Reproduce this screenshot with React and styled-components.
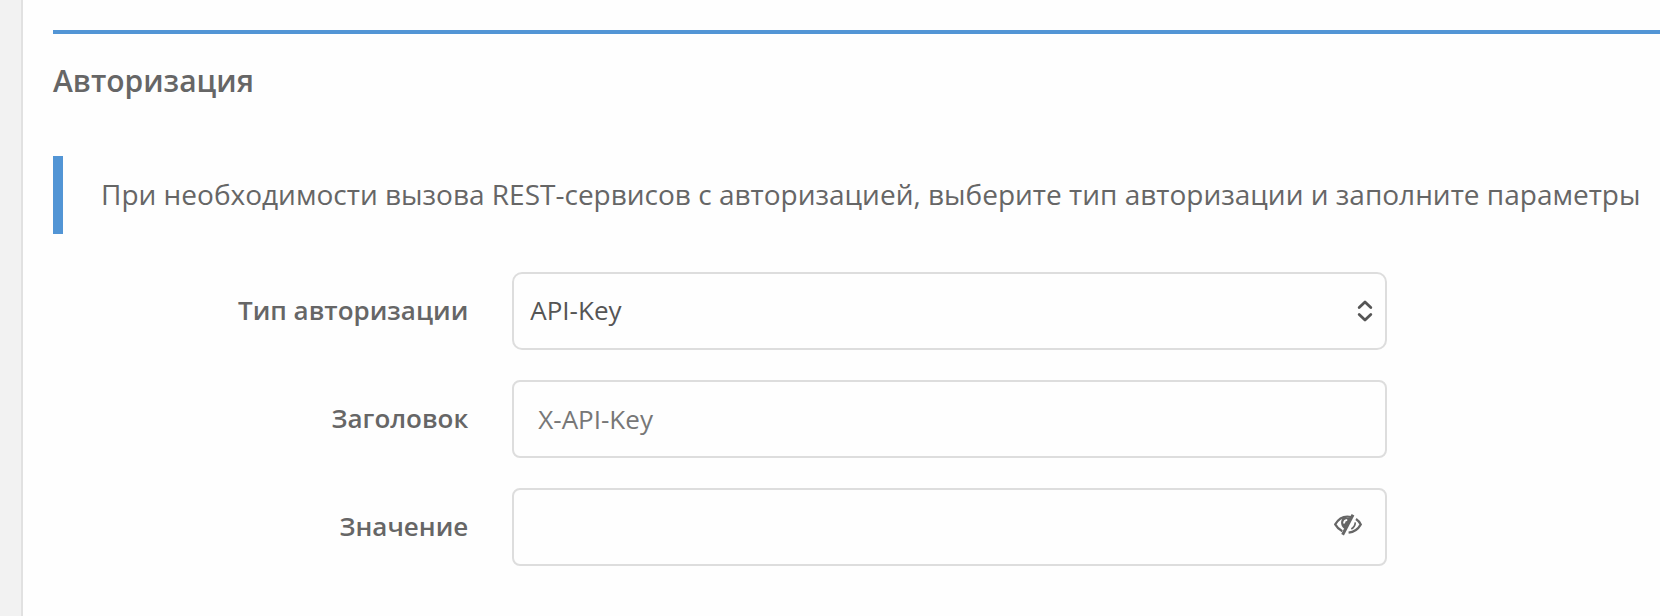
import { useState } from 'react';
import styled, { createGlobalStyle } from 'styled-components';

export default function App() {
    const [type, setType] = useState('API-Key');
    const [header, setHeader] = useState('');
    const [value, setValue] = useState('');
    const [visible, setVisible] = useState(false);

    return (
        <>
            <GlobalStyle />
            <Page>
                <Panel>
                    <Section>
                        <Title>Авторизация</Title>
                        <Notice>
                            При необходимости вызова REST-сервисов с авторизацией, выберите тип авторизации и заполните параметры
                        </Notice>
                        <Form>
                            <Row>
                                <Label htmlFor="type">Тип авторизации</Label>
                                <Field>
                                    <Select id="type" value={type} onChange={e => setType(e.target.value)}>
                                        <option>API-Key</option>
                                        <option>Basic</option>
                                        <option>Bearer</option>
                                    </Select>
                                    <Arrows viewBox="0 0 16 22" aria-hidden="true">
                                        <path d="M2.2 7.5 8 2 13.8 7.5M2.2 14.5 8 20 13.8 14.5" />
                                    </Arrows>
                                </Field>
                            </Row>
                            <Row>
                                <Label htmlFor="header">Заголовок</Label>
                                <Field>
                                    <Input
                                        id="header"
                                        placeholder="X-API-Key"
                                        value={header}
                                        onChange={e => setHeader(e.target.value)}
                                    />
                                </Field>
                            </Row>
                            <Row>
                                <Label htmlFor="value">Значение</Label>
                                <Field>
                                    <Input
                                        id="value"
                                        type={visible ? 'text' : 'password'}
                                        autoComplete="off"
                                        value={value}
                                        onChange={e => setValue(e.target.value)}
                                    />
                                    <Toggle
                                        type="button"
                                        aria-label="Показать значение"
                                        aria-pressed={visible}
                                        onClick={() => setVisible(!visible)}
                                    >
                                        <EyeClosed />
                                    </Toggle>
                                </Field>
                            </Row>
                        </Form>
                    </Section>
                </Panel>
            </Page>
        </>
    )
};

function EyeClosed() {
    return (
        <svg width="28" height="22" viewBox="0 0 28 22" fill="none" stroke="#666666" aria-hidden="true">
            <path d="M17 3C9.5 1.4 4.2 5.2 1.2 10.4 3 13.6 5.2 15.7 8.3 17.2" strokeWidth="2.2" />
            <path d="M22 5C24 6.4 25.8 8.5 26.8 10.4 24 15.4 19.8 18.2 14.6 18.7" strokeWidth="2.2" />
            <path d="M21.3 8.4C21.2 11.2 19.8 13.6 17.3 15" strokeWidth="1.6" />
            <path d="M8.6 3.8C6 8.2 6.8 12.6 10.6 15L16.8 4Z" fill="#666666" stroke="none" />
            <path d="M10 9.4C10 7.2 11.2 6 13.2 5.8" stroke="#fefefe" strokeWidth="1.8" />
            <path d="M19 0.8 8.6 20.8" strokeWidth="3" />
        </svg>
    )
}

const GlobalStyle = createGlobalStyle`
    * {
        box-sizing: border-box;
    }

    body {
        margin: 0;
        background-color: #f2f2f2;
        color: #666666;
        font-family: 'Open Sans', 'Noto Sans', sans-serif;
    }
`;

const Page = styled.main`
    display: flex;
    min-height: 100vh;
    padding-left: 21px;
`;

const Panel = styled.div`
    flex: 1;
    min-width: 0;
    padding: 30px 0 50px 30px;
    border-left: 2px solid #e1e1e1;
    background-color: #fefefe;
`;

const Section = styled.section`
    padding-top: 24px;
    border-top: 4px solid #5295d5;
`;

const Title = styled.h2`
    margin: 0 0 52px;
    font-size: 30px;
    font-weight: 600;
    line-height: 46px;
`;

const Notice = styled.p`
    margin: 0 0 38px;
    padding: 18px 0 20px 38px;
    border-left: 10px solid #5295d5;
    font-size: 28px;
    line-height: 40px;
`;

const Form = styled.form`
    display: grid;
    gap: 30px;
`;

const Row = styled.div`
    display: grid;
    grid-template-columns: 38fr 80fr 21fr;
    column-gap: 44px;
    align-items: center;
`;

const Label = styled.label`
    padding-bottom: 2px;
    font-size: 26px;
    font-weight: 600;
    line-height: 36px;
    text-align: right;
`;

const Field = styled.div`
    position: relative;
`;

const Input = styled.input`
    display: block;
    width: 100%;
    height: 78px;
    padding: 0 24px;
    border: 2px solid #dddddd;
    border-radius: 8px;
    background-color: #fefefe;
    color: #555555;
    font-family: inherit;
    font-size: 26px;

    &::placeholder {
        color: #777777;
    }

    &:focus {
        outline: none;
        border-color: #5295d5;
    }
`;

const Select = styled(Input).attrs({ as: 'select' })`
    padding: 0 48px 2px 16px;
    border-radius: 10px;
    appearance: none;
`;

const Arrows = styled.svg`
    position: absolute;
    top: 28px;
    right: 14px;
    width: 16px;
    height: 22px;
    fill: none;
    stroke: #555555;
    stroke-width: 2.8;
    stroke-linecap: round;
    stroke-linejoin: round;
    pointer-events: none;
`;

const Toggle = styled.button`
    position: absolute;
    top: 26px;
    right: 25px;
    display: flex;
    padding: 0;
    border: 0;
    background: none;
    cursor: pointer;
`;
